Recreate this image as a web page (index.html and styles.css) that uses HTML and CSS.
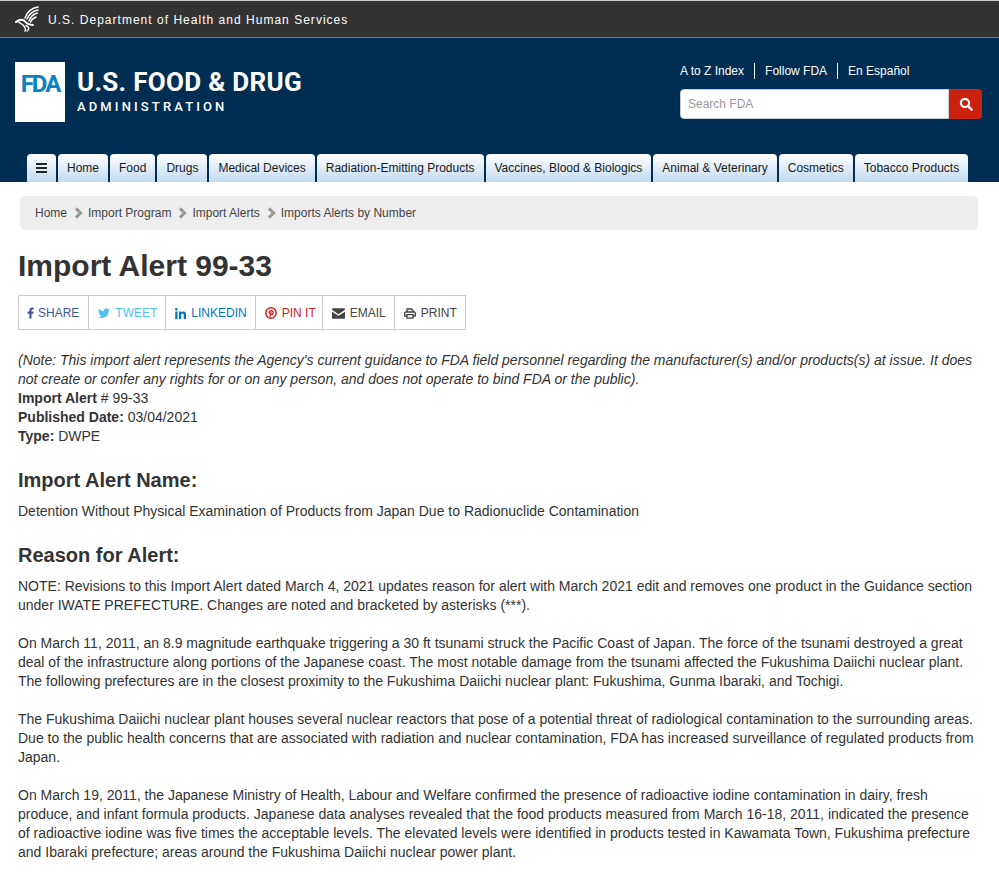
FILE: index.html
```html
<!DOCTYPE html>
<html lang="en">
<head>
    <meta charset="UTF-8">
    <meta name="viewport" content="width=device-width, initial-scale=1.0">
    <title>Import Alert 99-33</title>
    <link rel="stylesheet" href="styles.css">
</head>
<body>
    <div class="hhs-bar">
        <svg class="hhs-logo" viewBox="0 0 24 26" width="24" height="26">
            <g fill="none" stroke="#fff" stroke-linecap="round">
                <path d="M23 1 C17 2 12 6 10 12" stroke-width="1.500"/>
                <path d="M23 4 C18 5 14 8 12 13" stroke-width="1.500"/>
                <path d="M22.500 7 C18 8 15.500 11 14 15" stroke-width="1.500"/>
                <path d="M21 11 C18.500 12 16.500 13.500 15.500 16" stroke-width="1.500"/>
                <path d="M1 16 C4 13.500 7 13.500 9 14.500 C11 17 14 19 18 19" stroke-width="2"/>
                <path d="M3 15.500 L8 19 C10 21 11 23 10 25 M11 19.500 C14 21 15 22.500 12 25" stroke-width="1.500"/>
            </g>
        </svg>
        <span>U.S. Department of Health and Human Services</span>
    </div>

    <header class="site-header">
        <div class="header-top">
            <a class="brand" href="#">
                <span class="fda-box"><span class="fda-mark">FDA</span></span>
                <span class="brand-text">
                    <span class="brand-main">U.S. FOOD &amp; DRUG</span>
                    <span class="brand-sub">ADMINISTRATION</span>
                </span>
            </a>
            <div class="header-right">
                <ul class="util-links">
                    <li>A to Z Index</li>
                    <li>Follow FDA</li>
                    <li>En Español</li>
                </ul>
                <div class="search">
                    <div class="search-input">Search FDA</div>
                    <button class="search-btn" aria-label="Search">
                        <svg viewBox="0 0 16 16" width="14" height="14"><circle cx="6.800" cy="6.800" r="4.700" fill="none" stroke="#fff" stroke-width="2.400"/><path d="M10.400 10.400 L14.400 14.400" stroke="#fff" stroke-width="2.800" stroke-linecap="round"/></svg>
                    </button>
                </div>
            </div>
        </div>
        <nav class="tabs">
            <a class="tab tab-menu" href="#" aria-label="Menu"><span class="burger"></span></a>
            <a class="tab" href="#">Home</a>
            <a class="tab" href="#">Food</a>
            <a class="tab" href="#">Drugs</a>
            <a class="tab" href="#">Medical Devices</a>
            <a class="tab" href="#">Radiation-Emitting Products</a>
            <a class="tab" href="#">Vaccines, Blood &amp; Biologics</a>
            <a class="tab" href="#">Animal &amp; Veterinary</a>
            <a class="tab" href="#">Cosmetics</a>
            <a class="tab" href="#">Tobacco Products</a>
        </nav>
    </header>

    <div class="breadcrumb">
        <a href="#">Home</a><span class="sep"></span>
        <a href="#">Import Program</a><span class="sep"></span>
        <a href="#">Import Alerts</a><span class="sep"></span>
        <span class="current">Imports Alerts by Number</span>
    </div>

    <main class="content">
        <h1>Import Alert 99-33</h1>

        <ul class="share">
            <li class="fb"><svg viewBox="0 0 10 16" width="7" height="12"><path fill="currentColor" d="M6.500 16V9h2.600l.4-3H6.500V4.300c0-.9.3-1.400 1.500-1.400h1.600V.2C9.300.1 8.400 0 7.300 0 5 0 3.400 1.400 3.400 4V6H.8v3h2.600v7z"/></svg>SHARE</li>
            <li class="tw"><svg viewBox="0 0 16 14" width="12" height="11"><path fill="currentColor" d="M16 1.700c-.6.300-1.200.4-1.900.5.700-.4 1.200-1 1.400-1.800-.6.400-1.300.7-2.100.8C12.800.5 12 .1 11 .1 9.200.1 7.800 1.600 7.800 3.400c0 .3 0 .5.100.7C5.200 4 2.800 2.700 1.100.7.800 1.200.6 1.800.6 2.400c0 1.100.6 2.100 1.500 2.700-.5 0-1-.2-1.500-.4 0 1.600 1.100 2.900 2.600 3.200-.3.100-.6.100-.9.100-.2 0-.4 0-.6-.1.400 1.300 1.600 2.200 3 2.300-1.100.9-2.500 1.400-4 1.400H0c1.500.9 3.200 1.500 5 1.500 6 0 9.300-5 9.300-9.300v-.4c.7-.5 1.200-1 1.700-1.700z"/></svg>TWEET</li>
            <li class="li"><svg viewBox="0 0 14 14" width="11" height="11"><path fill="currentColor" d="M.3 4.600h2.900V14H.3zM1.700 0c.9 0 1.700.8 1.700 1.700s-.8 1.700-1.700 1.700S0 2.600 0 1.700 .8 0 1.700 0zM5 4.600h2.800v1.300c.4-.8 1.400-1.500 2.800-1.500 3 0 3.400 2 3.400 4.500V14h-2.900V9.400c0-1.100 0-2.500-1.500-2.500s-1.700 1.200-1.700 2.400V14H5z"/></svg>LINKEDIN</li>
            <li class="pi"><svg viewBox="0 0 16 16" width="12" height="12"><circle cx="8" cy="8" r="6.900" fill="none" stroke="currentColor" stroke-width="2"/><path fill="none" stroke="currentColor" stroke-width="1.700" stroke-linecap="round" d="M5.600 8.500C5 6.400 6.400 4.800 8.300 4.800c1.700 0 2.700 1.100 2.700 2.500 0 1.600-1 2.800-2.200 2.800-.7 0-1.200-.4-1.100-1M8 6.800 6.700 12.500"/></svg>PIN IT</li>
            <li class="em"><svg viewBox="0 0 16 13" width="13" height="11"><path fill="currentColor" d="M1.300 0h13.400C15.400 0 16 .6 16 1.300c0 .5-.3.900-.7 1.200L8 7.300.7 2.500C.3 2.200 0 1.800 0 1.300 0 .6.600 0 1.300 0zM0 4.200l8 5.100 8-5.100v7.500c0 .7-.6 1.300-1.300 1.300H1.300C.6 13 0 12.400 0 11.700z"/></svg>EMAIL</li>
            <li class="pr"><svg viewBox="0 0 16 14" width="12" height="11"><path fill="none" stroke="currentColor" stroke-width="1.800" d="M4 5V1h6l2 2v2M4 10.500H1V6.500C1 5.700 1.500 5 2.300 5h11.400c.8 0 1.300.7 1.300 1.500v4h-3M4 8.500h8v4.700H4z"/></svg>PRINT</li>
        </ul>

        <p class="meta">
            <em>(Note: This import alert represents the Agency's current guidance to FDA field personnel regarding the manufacturer(s) and/or products(s) at issue. It does not create or confer any rights for or on any person, and does not operate to bind FDA or the public).</em><br>
            <strong>Import Alert</strong> # 99-33<br>
            <strong>Published Date:</strong> 03/04/2021<br>
            <strong>Type:</strong> DWPE
        </p>

        <h2>Import Alert Name:</h2>
        <p class="para name">Detention Without Physical Examination of Products from Japan Due to Radionuclide Contamination</p>

        <h2>Reason for Alert:</h2>
        <p class="para">NOTE: Revisions to this Import Alert dated March 4, 2021 updates reason for alert with March 2021 edit and removes one product in the Guidance section under IWATE PREFECTURE. Changes are noted and bracketed by asterisks (***).</p>
        <p class="para">On March 11, 2011, an 8.9 magnitude earthquake triggering a 30 ft tsunami struck the Pacific Coast of Japan. The force of the tsunami destroyed a great deal of the infrastructure along portions of the Japanese coast. The most notable damage from the tsunami affected the Fukushima Daiichi nuclear plant. The following prefectures are in the closest proximity to the Fukushima Daiichi nuclear plant: Fukushima, Gunma Ibaraki, and Tochigi.</p>
        <p class="para">The Fukushima Daiichi nuclear plant houses several nuclear reactors that pose of a potential threat of radiological contamination to the surrounding areas. Due to the public health concerns that are associated with radiation and nuclear contamination, FDA has increased surveillance of regulated products from Japan.</p>
        <p class="para">On March 19, 2011, the Japanese Ministry of Health, Labour and Welfare confirmed the presence of radioactive iodine contamination in dairy, fresh produce, and infant formula products. Japanese data analyses revealed that the food products measured from March 16-18, 2011, indicated the presence of radioactive iodine was five times the acceptable levels. The elevated levels were identified in products tested in Kawamata Town, Fukushima prefecture and Ibaraki prefecture; areas around the Fukushima Daiichi nuclear power plant.</p>
    </main>
</body>
</html>
```

FILE: styles.css
```css
* {
    box-sizing: border-box;
}

body {
    margin: 0;
    font-family: "Liberation Sans", Arial, sans-serif;
    font-size: 14px;
    line-height: 19px;
    color: #333;
    background-color: #fff;
    overflow: hidden;
}

a {
    color: inherit;
    text-decoration: none;
}

/* HHS bar */
.hhs-bar {
    height: 38px;
    padding: 2px 0 0 15px;
    display: flex;
    align-items: center;
    gap: 9px;
    background-color: #333;
    border-top: 1px solid #ccc;
    border-bottom: 1px solid #777;
    color: #fff;
    font-size: 12px;
    letter-spacing: 1.02px;
}

.hhs-logo {
    margin-top: -2px;
}

/* Blue header */
.site-header {
    height: 144px;
    background-color: #002e52;
    display: flex;
    flex-direction: column;
    justify-content: space-between;
}

.header-top {
    display: flex;
    justify-content: space-between;
    padding: 24px 17px 0 15px;
}

.brand {
    display: flex;
    color: #fff;
}

.fda-box {
    width: 50px;
    height: 60px;
    padding-top: 9px;
    background-color: #fff;
    display: flex;
    justify-content: center;
}

.fda-mark {
    color: #0a82c4;
    font-family: Roboto, sans-serif;
    font-size: 24px;
    line-height: 26px;
    font-weight: 700;
    letter-spacing: -2px;
}

.brand-text {
    display: flex;
    flex-direction: column;
    margin-left: 12px;
}

.brand-main {
    margin-top: 4px;
    font-family: Roboto, sans-serif;
    font-size: 26px;
    line-height: 32px;
    font-weight: 700;
    letter-spacing: 0.300px;
    white-space: nowrap;
}

.brand-sub {
    font-family: Roboto, sans-serif;
    font-size: 13px;
    line-height: 18px;
    font-weight: 500;
    letter-spacing: 3.130px;
}

.header-right {
    width: 302px;
    padding-top: 1px;
}

.util-links {
    list-style: none;
    margin: 0 0 10px;
    padding: 0;
    display: flex;
    color: #fff;
    font-size: 12px;
}

.util-links li {
    line-height: 16px;
    padding-right: 10px;
    margin-right: 10px;
    border-right: 1px solid #fff;
}

.util-links li:last-child {
    border-right: none;
}

.search {
    display: flex;
    height: 30px;
}

.search-input {
    flex: 1;
    padding: 0 7px;
    line-height: 28px;
    font-size: 12px;
    color: #999;
    background-color: #fff;
    border: 1px solid #ccc;
    border-radius: 4px 0 0 4px;
}

.search-btn {
    width: 33px;
    padding: 0;
    border: none;
    border-radius: 0 4px 4px 0;
    background-color: #cd2110;
    display: flex;
    align-items: center;
    justify-content: center;
}

/* Main nav tabs */
.tabs {
    display: flex;
    gap: 2px;
    padding-left: 27px;
}

.tab {
    height: 28px;
    padding: 0 9px;
    display: flex;
    align-items: center;
    font-size: 12px;
    color: #1a1a1a;
    white-space: nowrap;
    background: linear-gradient(to bottom, #fff, #c2daf1);
    border-radius: 4px 4px 0 0;
}

.tab-menu {
    width: 29px;
    padding: 0;
    justify-content: center;
}

.burger {
    width: 11px;
    height: 10px;
    border-top: 2px solid #222;
    border-bottom: 2px solid #222;
    position: relative;
}

.burger::before {
    content: "";
    position: absolute;
    left: 0;
    right: 0;
    top: 2px;
    height: 2px;
    background-color: #222;
}

/* Breadcrumb */
.breadcrumb {
    margin: 14px 21px 0 20px;
    height: 34px;
    padding: 0 15px;
    display: flex;
    align-items: center;
    font-size: 12px;
    color: #444;
    background-color: #eee;
    border-radius: 5px;
}

.sep {
    width: 8px;
    height: 8px;
    margin: 0 7px 0 6px;
    border-top: 3px solid #999;
    border-right: 3px solid #999;
    transform: rotate(45deg);
}

/* Content */
.content {
    padding: 0 18px;
}

h1 {
    margin: 19px 0 12px;
    font-size: 30px;
    line-height: 34px;
    font-weight: bold;
    color: #333;
}

.share {
    list-style: none;
    margin: 0 0 21px;
    padding: 0;
    display: inline-flex;
    height: 35px;
    border: 1px solid #ccc;
    font-size: 12px;
    vertical-align: top;
}

.share li {
    display: flex;
    align-items: center;
    gap: 5px;
    padding: 1px 8px 0 9px;
    border-right: 1px solid #ccc;
}

.share li:last-child {
    border-right: none;
}

.share .fb {
    padding-left: 8px;
    padding-right: 9px;
    gap: 4px;
    color: #3b5998;
}
.share .tw { color: #4fc1f5; }
.share .li { color: #0077b5; }
.share .pi {
    padding-right: 6px;
    color: #cb2027;
}
.share .em { color: #444; }
.share .pr { color: #444; }

.meta {
    margin: 0 0 22px;
}

h2 {
    margin: 0 0 10px;
    font-size: 20px;
    line-height: 24px;
    font-weight: bold;
    color: #333;
}

.para {
    margin: 0 0 19px;
}

.para.name {
    margin-bottom: 22px;
}
```
